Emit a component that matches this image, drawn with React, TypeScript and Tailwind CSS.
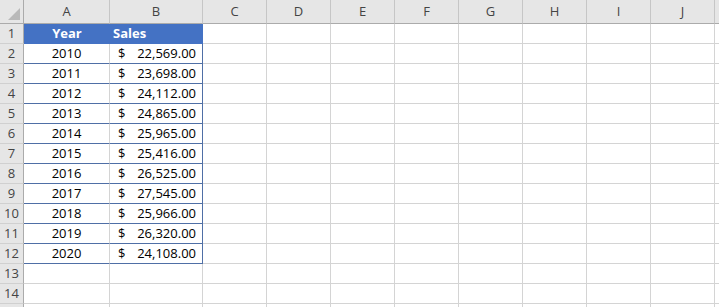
import React from 'react';

const sales: [number, string][] = [
  [2010, '22,569.00'],
  [2011, '23,698.00'],
  [2012, '24,112.00'],
  [2013, '24,865.00'],
  [2014, '25,965.00'],
  [2015, '25,416.00'],
  [2016, '26,525.00'],
  [2017, '27,545.00'],
  [2018, '25,966.00'],
  [2019, '26,320.00'],
  [2020, '24,108.00'],
];

const extraCols = ['C', 'D', 'E', 'F', 'G', 'H', 'I', 'J', ''];

export default function App() {
  // 14 visible rows plus a sliver of row 15
  const rows = Array.from({ length: 15 }, (_, i) => i + 1);

  return (
    <div
      className="w-[719px] h-[307px] overflow-hidden bg-white text-[13px] text-black"
      style={{ fontFamily: '"Open Sans", "Liberation Sans", sans-serif' }}
    >
      <div className="grid grid-cols-[24px_86px_93px_64px_64px_64px_64px_64px_64px_64px_64px_64px] grid-rows-[24px_repeat(15,20px)]">
        {/* header row */}
        <div className="relative bg-[#e6e6e6] border-r border-b border-[#ababab]">
          <svg className="absolute right-[3px] bottom-[3px]" width="12" height="12" viewBox="0 0 12 12">
            <polygon points="12,0 12,12 0,12" fill="#b9b9b9" />
          </svg>
        </div>
        {['A', 'B', ...extraCols].map((c, i) => (
          <div
            key={i}
            className="flex items-center justify-center bg-[#e6e6e6] border-r border-r-[#c6c6c6] border-b border-b-[#ababab] text-[#444]"
          >
            {c}
          </div>
        ))}

        {rows.map((r) => {
          const isHead = r === 1;
          const data = r >= 2 && r <= 12 ? sales[r - 2] : null;
          const inTable = r <= 12;
          return (
            <React.Fragment key={r}>
              <div className="flex items-center justify-center bg-[#e6e6e6] border-r border-r-[#ababab] border-b border-b-[#d0d0d0] text-[#444]">
                {r <= 14 ? r : ''}
              </div>
              {isHead ? (
                <>
                  <div className="flex items-center justify-center bg-[#4472c4] border-b border-[#4472c4] text-white font-bold">
                    Year
                  </div>
                  <div className="flex items-center pl-[3px] bg-[#4472c4] border-r border-b border-[#4472c4] text-white font-bold">
                    Sales
                  </div>
                </>
              ) : inTable ? (
                <>
                  <div className="flex items-center justify-center border-r border-r-[#d4d4d4] border-b border-b-[#4f6fa6]">
                    {data![0]}
                  </div>
                  <div className="flex items-center justify-between pl-[8px] pr-[6px] border-r border-r-[#4f6fa6] border-b border-b-[#4f6fa6]">
                    <span>$</span>
                    <span>{data![1]}</span>
                  </div>
                </>
              ) : (
                <>
                  <div className="border-r border-b border-[#d4d4d4]" />
                  <div className="border-r border-b border-[#d4d4d4]" />
                </>
              )}
              {extraCols.map((_, i) => (
                <div key={i} className="border-r border-b border-[#d4d4d4]" />
              ))}
            </React.Fragment>
          );
        })}
      </div>
    </div>
  );
}
